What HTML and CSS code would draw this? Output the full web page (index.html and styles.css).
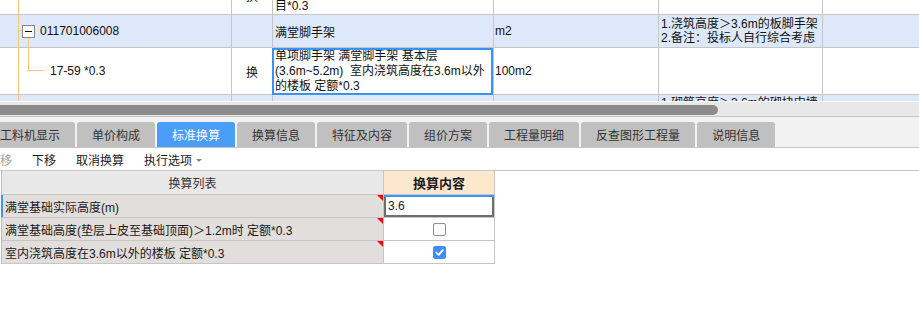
FILE: index.html
```html
<!DOCTYPE html>
<html lang="zh-CN">
<head>
<meta charset="utf-8">
<title>标准换算</title>
<link rel="stylesheet" href="styles.css">
</head>
<body>
<div class="grid">
  <div class="grid-inner">
    <div class="row r1">
      <div class="c c1 tree-v peek"><span class="leaf-text">17-58 *0.3</span></div>
      <div class="c c2 peek">换</div>
      <div class="c c3"><div class="lines">单项脚手架 满堂脚手架 增加层<br>1.2m 实际高度超过3.6m时 执行本子<br>目*0.3</div></div>
      <div class="c c4 peek">100m2</div>
      <div class="c c5"></div>
      <div class="c c6"></div>
    </div>
    <div class="row r2 blue">
      <div class="c c1 tree-parent"><span class="toggle"><span class="minus"></span></span><span class="code">011701006008</span></div>
      <div class="c c2"></div>
      <div class="c c3">满堂脚手架</div>
      <div class="c c4">m2</div>
      <div class="c c5"><div class="lines desc">1.浇筑高度＞3.6m的板脚手架<br>2.备注：投标人自行综合考虑</div></div>
      <div class="c c6"></div>
    </div>
    <div class="row r3">
      <div class="c c1 tree-leaf"><span class="leaf-text">17-59 *0.3</span></div>
      <div class="c c2">换</div>
      <div class="c c3 sel"><div class="lines">单项脚手架 满堂脚手架 基本层<br>(3.6m~5.2m)&nbsp; 室内浇筑高度在3.6m以外<br>的楼板 定额*0.3</div></div>
      <div class="c c4">100m2</div>
      <div class="c c5"></div>
      <div class="c c6"></div>
    </div>
    <div class="row r4 blue">
      <div class="c c1 tree-v"></div>
      <div class="c c2"></div>
      <div class="c c3"></div>
      <div class="c c4"></div>
      <div class="c c5 top"><div class="lines desc">1.砌筑高度＞3.6m的砌块内墙<br>2.备注：投标人自行综合考虑</div></div>
      <div class="c c6"></div>
    </div>
  </div>
</div>

<div class="hscroll"><div class="thumb"></div></div>

<div class="tabbar">
  <div class="tab">工料机显示</div>
  <div class="tab">单价构成</div>
  <div class="tab active">标准换算</div>
  <div class="tab">换算信息</div>
  <div class="tab">特征及内容</div>
  <div class="tab">组价方案</div>
  <div class="tab">工程量明细</div>
  <div class="tab">反查图形工程量</div>
  <div class="tab">说明信息</div>
</div>

<div class="toolbar">
  <span class="tool disabled">上移</span>
  <span class="tool">下移</span>
  <span class="tool">取消换算</span>
  <span class="tool">执行选项<span class="caret"></span></span>
</div>

<table class="conv">
  <thead>
    <tr><th class="h-list">换算列表</th><th class="h-content">换算内容</th></tr>
  </thead>
  <tbody>
    <tr class="cur"><td class="lbl">满堂基础实际高度(m)</td><td class="val edit">3.6</td></tr>
    <tr><td class="lbl">满堂基础高度(垫层上皮至基础顶面)＞1.2m时 定额*0.3</td><td class="val"><span class="cb"></span></td></tr>
    <tr><td class="lbl">室内浇筑高度在3.6m以外的楼板 定额*0.3</td><td class="val"><span class="cb on"><svg width="11" height="11" viewBox="0 0 11 11"><path d="M2.3 5.6 L4.6 7.8 L8.8 3.2" fill="none" stroke="#fff" stroke-width="1.8" stroke-linecap="round" stroke-linejoin="round"/></svg></span></td></tr>
  </tbody>
</table>
</body>
</html>
```

FILE: styles.css
```css
html, body {
  margin: 0;
  padding: 0;
  background: #fff;
}
body {
  width: 919px;
  height: 312px;
  overflow: hidden;
  font-family: "Liberation Sans", "Noto Sans CJK SC", sans-serif;
  font-size: 12px;
  color: #111;
}

/* ---------- top grid ---------- */
.grid {
  height: 101px;
  overflow: hidden;
}
.grid-inner {
  margin-top: -32px;
}
.row {
  display: flex;
  box-sizing: border-box;
  border-bottom: 1px solid #c6c6c6;
}
.r1, .r3 { height: 47px; }
.r2, .r4 { height: 33px; }
.blue { background: #dde8fa; }

.c {
  flex: none;
  box-sizing: border-box;
  border-right: 1px solid #c6c6c6;
  display: flex;
  align-items: center;
  white-space: nowrap;
  overflow: hidden;
}
.c1 { width: 232px; }
.c2 { width: 41px; justify-content: center; }
.c3 { width: 221px; padding-left: 2px; }
.c4 { width: 165px; padding-left: 1px; }
.c5 { width: 164px; padding-left: 2px; }
.c6 { flex: 1; border-right: 0; }
.c.top { align-items: flex-start; padding-top: 1px; }
.peek { padding-top: 8px; }

.lines { line-height: 15px; }
.lines.desc { line-height: 14px; }

.sel {
  position: relative;
  overflow: visible;
}
.sel::after {
  content: "";
  position: absolute;
  top: 0;
  left: -1px;
  right: 0;
  bottom: -1px;
  border: 2px solid #3a92f3;
  pointer-events: none;
}

/* tree connectors */
.tree-v {
  background: linear-gradient(#fcc676, #fcc676) 18px 0 / 1px 100% no-repeat;
}
.tree-v .leaf-text { padding-left: 50px; }
.tree-parent {
  background:
    linear-gradient(#fcc676, #fcc676) 18px 0 / 1px 100% no-repeat,
    linear-gradient(#fcc676, #fcc676) 18px 15px / 4px 1px no-repeat,
    linear-gradient(#fcc676, #fcc676) 28px 22px / 1px 100% no-repeat;
}
.tree-leaf {
  background:
    linear-gradient(#fcc676, #fcc676) 18px 0 / 1px 100% no-repeat,
    linear-gradient(#fcc676, #fcc676) 28px 0 / 1px 23px no-repeat,
    linear-gradient(#fcc676, #fcc676) 28px 22px / 16px 1px no-repeat;
}
.tree-leaf .leaf-text { padding-left: 50px; }
.toggle {
  box-sizing: border-box;
  width: 13px;
  height: 13px;
  margin-left: 22px;
  border: 1px solid #8a8a8a;
  background: #fff;
  display: flex;
  align-items: center;
  justify-content: center;
}
.minus {
  width: 7px;
  height: 1px;
  background: #111;
}
.code { margin-left: 5px; }

/* ---------- horizontal scrollbar ---------- */
.hscroll {
  height: 16px;
  box-sizing: border-box;
  border-top: 1px solid #fff;
  border-bottom: 1px solid #c4c4c4;
  background: #e8e8e8;
  padding-top: 3px;
  overflow: hidden;
}
.thumb {
  width: 723px;
  height: 10px;
  margin-left: -5px;
  border-radius: 5px;
  background: #8c8c8c;
}

/* ---------- tabs ---------- */
.tabbar {
  display: flex;
  gap: 2px;
  padding-top: 5px;
  background: #f2f2f2;
  border-bottom: 1px solid #c6c6c6;
  overflow: hidden;
}
.tab {
  flex: none;
  height: 25px;
  padding: 0 15px;
  display: flex;
  align-items: center;
  background: #c0c0c0;
  color: #333;
  border-radius: 3px 3px 0 0;
  font-size: 12px;
}
.tab:first-child { margin-left: -15px; }
.tab.active {
  background: #4a9df9;
  color: #fff;
}

/* ---------- toolbar ---------- */
.toolbar {
  height: 22px;
  display: flex;
  align-items: center;
  gap: 20px;
  border-bottom: 1px solid #c6c6c6;
  overflow: hidden;
}
.tool {
  color: #1a1a1a;
  display: flex;
  align-items: center;
}
.tool.disabled {
  color: #a3a3a3;
  margin-left: -12px;
}
.caret {
  width: 0;
  height: 0;
  margin-left: 4px;
  margin-top: 2px;
  border-left: 3px solid transparent;
  border-right: 3px solid transparent;
  border-top: 3px solid #8a8a8a;
}

/* ---------- conversion table ---------- */
.conv {
  margin-left: 1px;
  border-collapse: separate;
  border-spacing: 0;
  table-layout: fixed;
  width: 494px;
}
.conv th, .conv td {
  box-sizing: border-box;
  padding: 0 4px;
  white-space: nowrap;
  border-right: 1px solid #c6c6c6;
  border-bottom: 1px solid #c6c6c6;
  font-size: 12px;
}
.conv th {
  height: 24px;
  font-weight: normal;
  color: #333;
}
.conv .h-list {
  width: 383px;
  background: #e8e8e8;
  border-left: 1px solid #bcbcbc;
}
.conv .h-content {
  width: 111px;
  background: #fde8cd;
  font-weight: bold;
  font-size: 13px;
  color: #1a1a1a;
}
.conv td {
  height: 23px;
  color: #1a1a1a;
}
.conv .lbl {
  position: relative;
  background: #e2dedb;
  border-left: 1px solid #bcbcbc;
  padding-left: 3px;
}
.conv .lbl::after {
  content: "";
  position: absolute;
  top: 0;
  right: 0;
  width: 0;
  height: 0;
  border-top: 6px solid #f00;
  border-left: 6px solid transparent;
}
.conv .cur .lbl {
  border-left-color: #3d95f5;
  box-shadow: inset 1px 0 0 #3d95f5;
}
.conv .val {
  background: #fff;
  text-align: center;
}
.conv .edit {
  text-align: left;
  padding-left: 4px;
  box-shadow:
    inset 0 2px 0 #3d95f5,
    inset 2px 0 0 #6e6e6e,
    inset -2px 0 0 #6e6e6e,
    inset 0 -2px 0 #6e6e6e;
}
.cb {
  box-sizing: border-box;
  display: inline-flex;
  align-items: center;
  justify-content: center;
  width: 13px;
  height: 13px;
  border: 1px solid #8e8e8e;
  border-radius: 2px;
  background: #fff;
  vertical-align: middle;
}
.cb.on {
  background: #3f8ef4;
  border-color: #3f8ef4;
}
.cb svg { display: block; }
```
